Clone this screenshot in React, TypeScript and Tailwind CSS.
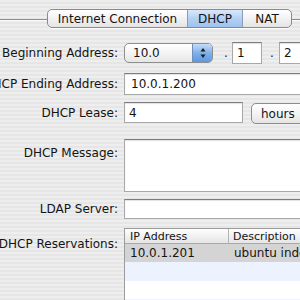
export default function App() {
  const stripes =
    "bg-[repeating-linear-gradient(180deg,#eeeeee_0px,#eeeeee_2px,#e6e6e6_2px,#e6e6e6_4px)]"
  const field =
    "shrink-0 bg-white border border-[#a8a8a8] border-t-[#7c7c7c] shadow-[inset_0_1px_1px_rgba(0,0,0,0.12)]"

  return (
    <div
      className={`w-[300px] h-[300px] overflow-hidden ${stripes} font-['DejaVu_Sans',sans-serif] text-[12px] text-[#141414]`}
    >
      {/* tab bar */}
      <div className="flex pt-[9px]">
        <div className="w-[47px] mt-[10px] h-[2px] border-t border-[#8d8d8d] bg-[#fafafa] shrink-0" />
        <div className="flex h-[19px] rounded-[5px] border border-[#8a8a8a] bg-[linear-gradient(#ffffff,#f2f2f2_50%,#e4e4e4)] overflow-hidden shadow-[0_1px_0_rgba(255,255,255,0.8)] shrink-0">
          <div className="w-[140px] flex items-center justify-center border-r border-[#9a9a9a] leading-none">
            Internet Connection
          </div>
          <div className="w-[55px] flex items-center justify-center border-r border-[#8a9bb5] bg-[linear-gradient(#d9e8fb,#b4d0f3_50%,#9ec2ee)] leading-none">
            DHCP
          </div>
          <div className="w-[48px] flex items-center justify-center leading-none">NAT</div>
        </div>
        <div className="flex-1 mt-[10px] h-[2px] border-t border-[#8d8d8d] bg-[#fafafa]" />
      </div>

      <div className="ml-[-42px] mt-[15px] flex flex-col">
        {/* Beginning address */}
        <div className="flex items-center h-[20px]">
          <div className="w-[160px] shrink-0 text-right whitespace-nowrap">Beginning Address:</div>
          <div className="ml-[6px] flex items-center shrink-0">
            <div className="flex shrink-0 w-[89px] h-[20px] rounded-[5px] border border-[#8e8e8e] overflow-hidden bg-[linear-gradient(#ffffff,#f4f4f4_50%,#e6e6e6)]">
              <div className="flex-1 flex items-center pl-[8px]">10.0</div>
              <div className="w-[20px] flex items-center justify-center border-l border-[#6f8fbf] bg-[linear-gradient(#c5dcf7,#7fb0ea_50%,#5c98e2)]">
                <svg width="6" height="12" viewBox="0 0 6 12">
                  <path d="M3 1 L5.5 4.5 H0.5 Z" fill="#1a1a1a" />
                  <path d="M3 11 L5.5 7.5 H0.5 Z" fill="#1a1a1a" />
                </svg>
              </div>
            </div>
            <span className="ml-[8px] w-[10px] text-center">.</span>
            <div className={`ml-[1px] w-[30px] h-[22px] flex items-center pl-[4px] ${field}`}>1</div>
            <span className="ml-[5px] w-[10px] text-center">.</span>
            <div className={`ml-[2px] w-[40px] h-[22px] flex items-center pl-[4px] ${field}`}>2</div>
          </div>
        </div>

        {/* Ending address */}
        <div className="flex items-center h-[22px] mt-[10px]">
          <div className="w-[160px] shrink-0 text-right whitespace-nowrap">DHCP Ending Address:</div>
          <div className={`ml-[6px] w-[200px] h-[22px] flex items-center pl-[6px] ${field}`}>10.0.1.200</div>
        </div>

        {/* Lease */}
        <div className="flex items-center h-[21px] mt-[7px]">
          <div className="w-[160px] shrink-0 text-right whitespace-nowrap">DHCP Lease:</div>
          <div className={`ml-[6px] w-[119px] h-[21px] flex items-center pl-[4px] ${field}`}>4</div>
          <div className="ml-[8px] shrink-0 w-[70px] h-[21px] mt-[2px] rounded-[5px] border border-[#8e8e8e] flex items-center pl-[9px] bg-[linear-gradient(#ffffff,#f4f4f4_50%,#e4e4e4)]">
            hours
          </div>
        </div>

        {/* Message */}
        <div className="flex mt-[16px]">
          <div className="w-[160px] shrink-0 text-right whitespace-nowrap pt-[5px]">DHCP Message:</div>
          <div className={`ml-[6px] w-[200px] h-[53px] ${field}`} />
        </div>

        {/* LDAP */}
        <div className="flex items-center h-[20px] mt-[7px]">
          <div className="w-[160px] shrink-0 text-right whitespace-nowrap">LDAP Server:</div>
          <div className={`ml-[6px] w-[200px] h-[20px] ${field}`} />
        </div>

        {/* Reservations */}
        <div className="flex mt-[9px]">
          <div className="w-[160px] shrink-0 text-right whitespace-nowrap pt-[7px]">DHCP Reservations:</div>
          <div className="ml-[6px] shrink-0 w-[200px] border border-[#9c9c9c] bg-white">
            <div className="flex h-[15px] text-[11px] leading-none border-b border-[#a9a9a9] bg-[linear-gradient(#ffffff,#f1f1f1_50%,#e6e6e6)]">
              <div className="w-[104px] flex items-center pl-[5px] border-r border-[#b5b5b5]">IP Address</div>
              <div className="flex-1 flex items-center pl-[4px]">Description</div>
            </div>
            <div className="flex h-[18px] items-center bg-[#d4d4d4]">
              <div className="w-[104px] pl-[5px]">10.0.1.201</div>
              <div className="flex-1 pl-[5px] whitespace-nowrap">ubuntu indoor</div>
            </div>
            <div className="h-[19px] bg-[#edf3fe]" />
            <div className="h-[18px] bg-white" />
            <div className="h-[18px] bg-[#edf3fe]" />
          </div>
        </div>
      </div>
    </div>
  )
}
